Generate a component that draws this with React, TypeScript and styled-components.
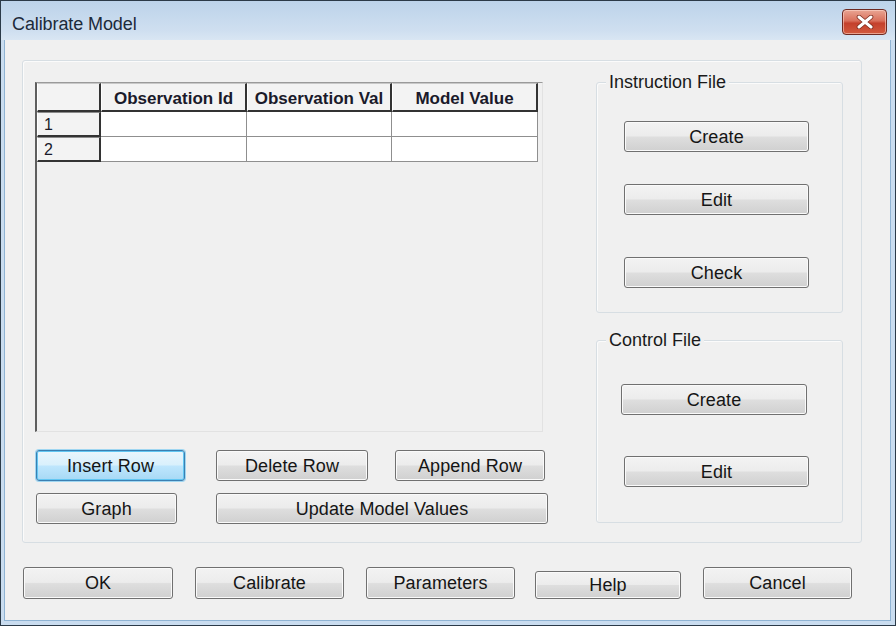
import React from "react";
import styled, { createGlobalStyle, css } from "styled-components";

const GlobalStyle = createGlobalStyle`
  html, body { margin: 0; padding: 0; background: #ffffff; }
  body { font-family: "Liberation Sans", Arial, sans-serif; }
  * { box-sizing: border-box; }
`;

const Window = styled.div`
  width: 896px;
  height: 626px;
  border: 1px solid #2b3a48;
  background: linear-gradient(180deg, #bcd3ea 0px, #cfdff0 30px, #d9e6f3 39px);
  display: flex;
  flex-direction: column;
  overflow: hidden;
`;

const TitleBar = styled.div`
  height: 39px;
  flex: none;
  display: flex;
  align-items: flex-start;
  justify-content: space-between;
  padding: 0 8px 0 11px;
`;

const Title = styled.span`
  font-size: 18px;
  line-height: 22px;
  margin-top: 12px;
  color: #1c2a3a;
  letter-spacing: -0.1px;
`;

const CloseButton = styled.button`
  width: 45px;
  height: 26px;
  margin-top: 8px;
  border: 1px solid #6e2a22;
  border-radius: 4px;
  padding: 0;
  display: flex;
  align-items: center;
  justify-content: center;
  background: linear-gradient(180deg, #e9a593 0%, #d9705c 45%, #c4402c 55%, #d25a3e 100%);
  box-shadow: inset 0 0 0 1px rgba(255, 220, 210, 0.55);
`;

const Frame = styled.div`
  flex: 1;
  display: flex;
  padding: 0 4px 4px 3px;
  background: #c9dcef;
`;

const Client = styled.div`
  flex: 1;
  display: flex;
  flex-direction: column;
  background: #f0f0f0;
  border: 1px solid #8fb3d3;
  border-top: none;
  padding: 20px 0 0 17px;
`;

const Panel = styled.div`
  width: 840px;
  height: 483px;
  border: 1px solid #d7dee3;
  border-radius: 3px;
  box-shadow: inset 1px 1px 0 #fbfbfb;
  display: flex;
  padding: 21px 18px 0 12px;
`;

const LeftColumn = styled.div`
  width: 514px;
  display: flex;
  flex-direction: column;
`;

const GridFrame = styled.div`
  width: 508px;
  height: 350px;
  border-left: 2px solid #5e5e5e;
  border-top: 1px solid #9a9a9a;
  border-right: 1px solid #e2e2e2;
  border-bottom: 1px solid #e2e2e2;
  background: #f0f0f0;
`;

const Table = styled.div`
  display: grid;
  grid-template-columns: 64px 146px 145px 146px;
  grid-template-rows: 29px 25px 25px;
`;

const HeaderCell = styled.div<{ $row?: boolean }>`
  background: #f3f3f3;
  border-top: 1px solid #c8c8c8;
  border-left: 1px solid #ffffff;
  border-right: 2px solid #333333;
  border-bottom: 2px solid #333333;
  font-size: 17px;
  font-weight: bold;
  color: #1a1a2a;
  display: flex;
  align-items: center;
  justify-content: center;
  white-space: nowrap;
  overflow: hidden;
  padding-top: 3px;
  ${(p) =>
    p.$row &&
    css`
      font-weight: normal;
      justify-content: flex-start;
      padding: 1px 0 0 6px;
      font-size: 16px;
      border-top: 1px solid #8a8a8a;
    `}
`;

const DataCell = styled.div`
  background: #ffffff;
  border-right: 1px solid #8f8f8f;
  border-bottom: 1px solid #8f8f8f;
`;

const ButtonRow = styled.div<{ $mt: number }>`
  display: flex;
  margin-top: ${(p) => p.$mt}px;
`;

const Button = styled.button<{ $w: number; $h?: number; $ml?: number; $mt?: number; $focus?: boolean }>`
  width: ${(p) => p.$w}px;
  height: ${(p) => p.$h ?? 31}px;
  margin-left: ${(p) => p.$ml ?? 0}px;
  margin-top: ${(p) => p.$mt ?? 0}px;
  flex: none;
  font-family: "Liberation Sans", Arial, sans-serif;
  font-size: 18px;
  letter-spacing: 0.1px;
  color: #151515;
  padding: 1px 0 0;
  border: 1px solid #707070;
  border-radius: 3px;
  background: linear-gradient(180deg, #f3f3f3 0%, #ececec 48%, #dedede 52%, #d0d0d0 100%);
  box-shadow: inset 0 0 0 1px #fafafa;
  cursor: default;
  ${(p) =>
    p.$focus &&
    css`
      border-color: #3c7fb1;
      background: linear-gradient(180deg, #eaf6fd 0%, #d9f0fc 48%, #bee6fd 52%, #a7d9f5 100%);
      box-shadow: inset 0 0 0 1px #62c6f2, 0 0 0 1px #9fd6f1;
    `}
`;

const RightColumn = styled.div`
  margin-left: auto;
  width: 247px;
  display: flex;
  flex-direction: column;
`;

const GroupBox = styled.div<{ $h: number; $mt?: number; $pt: number }>`
  position: relative;
  height: ${(p) => p.$h}px;
  margin-top: ${(p) => p.$mt ?? 0}px;
  border: 1px solid #d7dee3;
  border-radius: 3px;
  box-shadow: inset 1px 1px 0 #fbfbfb;
  padding-top: ${(p) => p.$pt}px;
  display: flex;
  flex-direction: column;
`;

const GroupLabel = styled.span`
  position: absolute;
  top: -12px;
  left: 9px;
  padding: 0 3px;
  background: #f0f0f0;
  font-size: 18px;
  line-height: 22px;
  color: #1a1a1a;
`;

const Footer = styled.div`
  display: flex;
  margin-top: 24px;
  padding-left: 1px;
`;

const Close = () => (
  <svg width="18" height="14" viewBox="0 0 18 14">
    <path d="M3 2 L15 12 M15 2 L3 12" stroke="#7a2a1c" strokeWidth="4.6" strokeLinecap="round" />
    <path d="M3 2 L15 12 M15 2 L3 12" stroke="#ffffff" strokeWidth="3" strokeLinecap="round" />
  </svg>
);

export default function App() {
  return (
    <>
      <GlobalStyle />
      <Window>
        <TitleBar>
          <Title>Calibrate Model</Title>
          <CloseButton aria-label="Close">
            <Close />
          </CloseButton>
        </TitleBar>
        <Frame>
          <Client>
            <Panel>
              <LeftColumn>
                <GridFrame>
                  <Table>
                    <HeaderCell />
                    <HeaderCell>Observation Id</HeaderCell>
                    <HeaderCell>Observation Val</HeaderCell>
                    <HeaderCell>Model Value</HeaderCell>
                    <HeaderCell $row>1</HeaderCell>
                    <DataCell />
                    <DataCell />
                    <DataCell />
                    <HeaderCell $row>2</HeaderCell>
                    <DataCell />
                    <DataCell />
                    <DataCell />
                  </Table>
                </GridFrame>
                <ButtonRow $mt={18}>
                  <Button $w={149} $ml={1} $focus>Insert Row</Button>
                  <Button $w={152} $ml={31}>Delete Row</Button>
                  <Button $w={150} $ml={27}>Append Row</Button>
                </ButtonRow>
                <ButtonRow $mt={12}>
                  <Button $w={141} $ml={1}>Graph</Button>
                  <Button $w={332} $ml={39}>Update Model Values</Button>
                </ButtonRow>
              </LeftColumn>
              <RightColumn>
                <GroupBox $h={231} $pt={38}>
                  <GroupLabel>Instruction File</GroupLabel>
                  <Button $w={185} $ml={27}>Create</Button>
                  <Button $w={185} $ml={27} $mt={32}>Edit</Button>
                  <Button $w={185} $ml={27} $mt={42}>Check</Button>
                </GroupBox>
                <GroupBox $h={183} $mt={27} $pt={43}>
                  <GroupLabel>Control File</GroupLabel>
                  <Button $w={186} $ml={24}>Create</Button>
                  <Button $w={185} $ml={27} $mt={41}>Edit</Button>
                </GroupBox>
              </RightColumn>
            </Panel>
            <Footer>
              <Button $w={150} $h={32}>OK</Button>
              <Button $w={149} $h={32} $ml={22}>Calibrate</Button>
              <Button $w={149} $h={32} $ml={22}>Parameters</Button>
              <Button $w={146} $h={28} $ml={20} $mt={4}>Help</Button>
              <Button $w={149} $h={32} $ml={22}>Cancel</Button>
            </Footer>
          </Client>
        </Frame>
      </Window>
    </>
  );
}
